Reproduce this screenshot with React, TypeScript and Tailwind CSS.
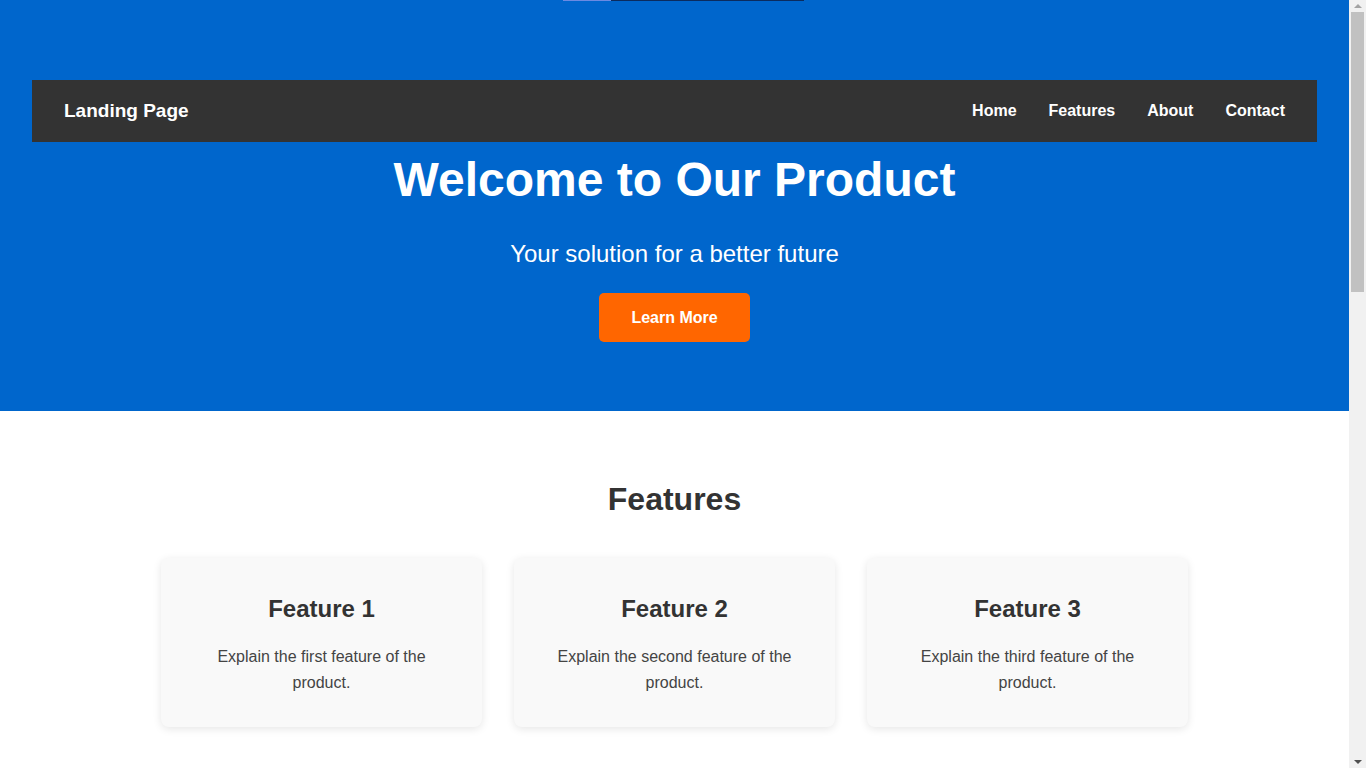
import React from "react";

type Feature = {
  title: string;
  text: string;
};

const features: Feature[] = [
  { title: "Feature 1", text: "Explain the first feature of the product." },
  { title: "Feature 2", text: "Explain the second feature of the product." },
  { title: "Feature 3", text: "Explain the third feature of the product." },
];

const navLinks = ["Home", "Features", "About", "Contact"];

const FeatureCard: React.FC<Feature> = ({ title, text }) => {
  return (
    <div className="w-[321px] rounded-lg bg-[#f9f9f9] p-8 text-center shadow-[0_2px_8px_rgba(0,0,0,0.1)]">
      <h3 className="mt-[5px] mb-[22px] text-[24px] font-bold leading-[1.15] text-[#333]">
        {title}
      </h3>
      <p className="text-base leading-[1.6] text-[#444]">{text}</p>
    </div>
  );
};

// fake window scrollbar, the page is taller than the viewport
const Scrollbar = () => (
  <div className="flex h-full w-[17px] shrink-0 flex-col bg-[#f1f1f1]">
    <div className="flex h-[12px] items-center justify-center">
      <div className="h-0 w-0 border-x-[4px] border-b-[4px] border-x-transparent border-b-[#a3a3a3]" />
    </div>
    <div className="flex-1">
      <div className="mx-auto h-[280px] w-[13px] bg-[#c1c1c1]" />
    </div>
    <div className="flex h-[12px] items-center justify-center">
      <div className="h-0 w-0 border-x-[4px] border-t-[4px] border-x-transparent border-t-[#505050]" />
    </div>
  </div>
);

export default function App() {
  return (
    <div className="flex h-screen overflow-hidden bg-white font-['Liberation_Sans',Arial,sans-serif] text-[#333]">
      <main className="min-w-0 flex-1 overflow-hidden">
        <header className="bg-[#0066cc] px-8 pb-[69px] text-center text-white">
          <div className="flex h-px">
            <div className="ml-[531px] w-[48px] bg-[#6b8ae2]" />
            <div className="w-[193px] bg-[#0b2b5e]" />
          </div>
          <nav className="mt-[79px] flex h-[62px] items-center justify-between bg-[#333] px-8">
            <span className="text-[19px] font-bold text-white">Landing Page</span>
            <ul className="flex gap-8">
              {navLinks.map((link) => (
                <li key={link}>
                  <a href="#" className="text-base font-bold text-white">
                    {link}
                  </a>
                </li>
              ))}
            </ul>
          </nav>
          <h1 className="mt-[10px] text-[48px] font-bold leading-[1.15]">
            Welcome to Our Product
          </h1>
          <p className="mt-[33px] text-[24px] leading-[1.15]">
            Your solution for a better future
          </p>
          <button className="mt-[25px] h-[49px] rounded-[5px] bg-[#ff6600] px-8 pt-px text-base font-bold text-white">
            Learn More
          </button>
        </header>

        <section className="px-8 pt-[70px] pb-16 text-center">
          <h2 className="text-[32px] font-bold leading-[1.15] text-[#333]">
            Features
          </h2>
          <div className="mt-10 flex justify-center gap-8">
            {features.map((f) => (
              <FeatureCard key={f.title} {...f} />
            ))}
          </div>
        </section>
      </main>
      <Scrollbar />
    </div>
  );
}
